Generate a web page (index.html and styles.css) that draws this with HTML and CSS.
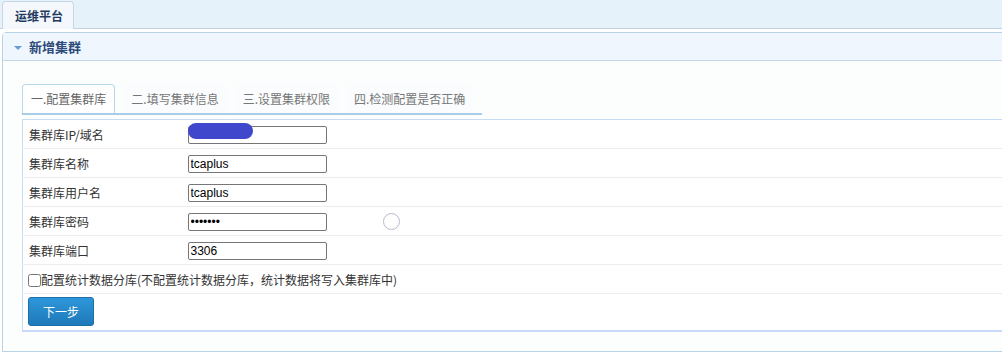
FILE: index.html
```html
<!DOCTYPE html>
<html lang="zh-CN">
<head>
    <meta charset="UTF-8">
    <meta name="viewport" content="width=device-width, initial-scale=1.0">
    <title>运维平台</title>
    <link rel="stylesheet" href="styles.css">
</head>
<body>
    <div class="top-bar">
        <div class="top-tab">运维平台</div>
    </div>
    <div class="panel">
        <div class="panel-head"><span class="caret"></span>新增集群</div>
        <div class="panel-body">
            <ul class="steps">
                <li class="step active">一.配置集群库</li>
                <li class="step">二.填写集群信息</li>
                <li class="step">三.设置集群权限</li>
                <li class="step">四.检测配置是否正确</li>
            </ul>
            <table class="form">
                <tr>
                    <td class="label">集群库IP/域名</td>
                    <td><span class="field"><input type="text" value=""><span class="mask"></span></span></td>
                </tr>
                <tr>
                    <td class="label">集群库名称</td>
                    <td><input type="text" value="tcaplus"></td>
                </tr>
                <tr>
                    <td class="label">集群库用户名</td>
                    <td><input type="text" value="tcaplus"></td>
                </tr>
                <tr>
                    <td class="label">集群库密码</td>
                    <td><input type="password" value="1234567"><span class="spinner"></span></td>
                </tr>
                <tr>
                    <td class="label">集群库端口</td>
                    <td><input type="text" value="3306"></td>
                </tr>
                <tr>
                    <td colspan="2" class="check-cell"><label><input type="checkbox">配置统计数据分库(不配置统计数据分库，统计数据将写入集群库中)</label></td>
                </tr>
                <tr>
                    <td colspan="2" class="btn-cell"><button class="btn">下一步</button></td>
                </tr>
            </table>
        </div>
    </div>
</body>
</html>
```

FILE: styles.css
```css
*{
    margin: 0;
    padding: 0;
    box-sizing: border-box;
}

body{
    font-family: "Noto Sans CJK SC", "Liberation Sans", sans-serif;
    font-size: 12px;
    color: #333;
    background: #fff;
    overflow: hidden;
}

li{
    list-style: none;
}

.top-bar{
    height: 29px;
    background: #e6f2f9;
    border-bottom: 1px solid #c4cfe0;
    padding: 1px 0 0 2px;
}

.top-tab{
    display: inline-block;
    width: 72px;
    height: 28px;
    line-height: 27px;
    padding-left: 12px;
    background: #f4f8fc;
    border: 1px solid #c6d6e6;
    border-bottom: none;
    border-radius: 4px 4px 0 0;
    font-weight: bold;
    color: #1f3b60;
}

.panel{
    margin: 3px -10px 0 2px;
    border: 1px solid #b8d2e6;
    border-radius: 4px 4px 0 0;
}

.panel-head{
    height: 28px;
    line-height: 27px;
    padding-left: 26px;
    position: relative;
    background: #f0f6fe;
    border-bottom: 1px solid #c3d7ea;
    font-size: 13px;
    font-weight: bold;
    color: #2c4a7a;
}

.caret{
    position: absolute;
    left: 11px;
    top: 13px;
    border-left: 4px solid transparent;
    border-right: 4px solid transparent;
    border-top: 4px solid #6a9ed0;
}

.panel-body{
    background: #fcfefe;
    padding: 23px 0 19px 19px;
}

.steps{
    display: flex;
    width: 460px;
    border-bottom: 2px solid #a9cde8;
    gap: 8px;
}

.step{
    height: 29px;
    line-height: 29px;
    padding: 0 8px;
    color: #777;
    background: #fafcfd;
}

.step.active{
    border: 1px solid #b8d8ec;
    border-bottom: none;
    border-radius: 4px 4px 0 0;
    background: #fff;
    color: #666;
    line-height: 27px;
}

.form{
    margin-top: 4px;
    width: 100%;
    border-collapse: collapse;
    background: #fff;
    border-top: 1px solid #c6dcf3;
    border-left: 1px solid #c6dcf3;
    border-bottom: 2px solid #c8d8f6;
}

.form td{
    height: 29px;
    border-bottom: 1px solid #ececec;
    vertical-align: middle;
}

.form tr:last-child td{
    border-bottom: none;
}

.label{
    width: 165px;
    padding-left: 6px;
}

.form input[type="text"],
.form input[type="password"]{
    width: 139px;
    height: 18px;
    border: 1px solid #767676;
    border-radius: 2px;
    padding: 0 2px;
    font-family: "Liberation Sans", sans-serif;
    font-size: 12px;
    color: #000;
    vertical-align: middle;
}

.field{
    position: relative;
    display: inline-block;
    vertical-align: middle;
}

.field input{
    display: block;
}

.mask{
    position: absolute;
    left: 0;
    top: -3px;
    width: 65px;
    height: 16px;
    border-radius: 8px;
    background: #3f48cc;
}

.spinner{
    display: inline-block;
    width: 17px;
    height: 17px;
    margin-left: 56px;
    border: 1.5px solid #b9b9cc;
    border-radius: 50%;
    vertical-align: middle;
}

.check-cell{
    padding-left: 5px;
}

.check-cell label{
    display: flex;
    align-items: center;
}

.check-cell input{
    width: 13px;
    height: 13px;
    margin: 3px 0 0 0;
}

.btn-cell{
    height: 36px !important;
    padding: 3px 0 4px 5px;
}

.btn{
    width: 66px;
    height: 29px;
    border: 1px solid #1c6fa9;
    border-radius: 3px;
    background: linear-gradient(#2d97da, #1f79b8);
    color: #fff;
    font-family: "Noto Sans CJK SC", sans-serif;
    font-size: 12px;
}
```
